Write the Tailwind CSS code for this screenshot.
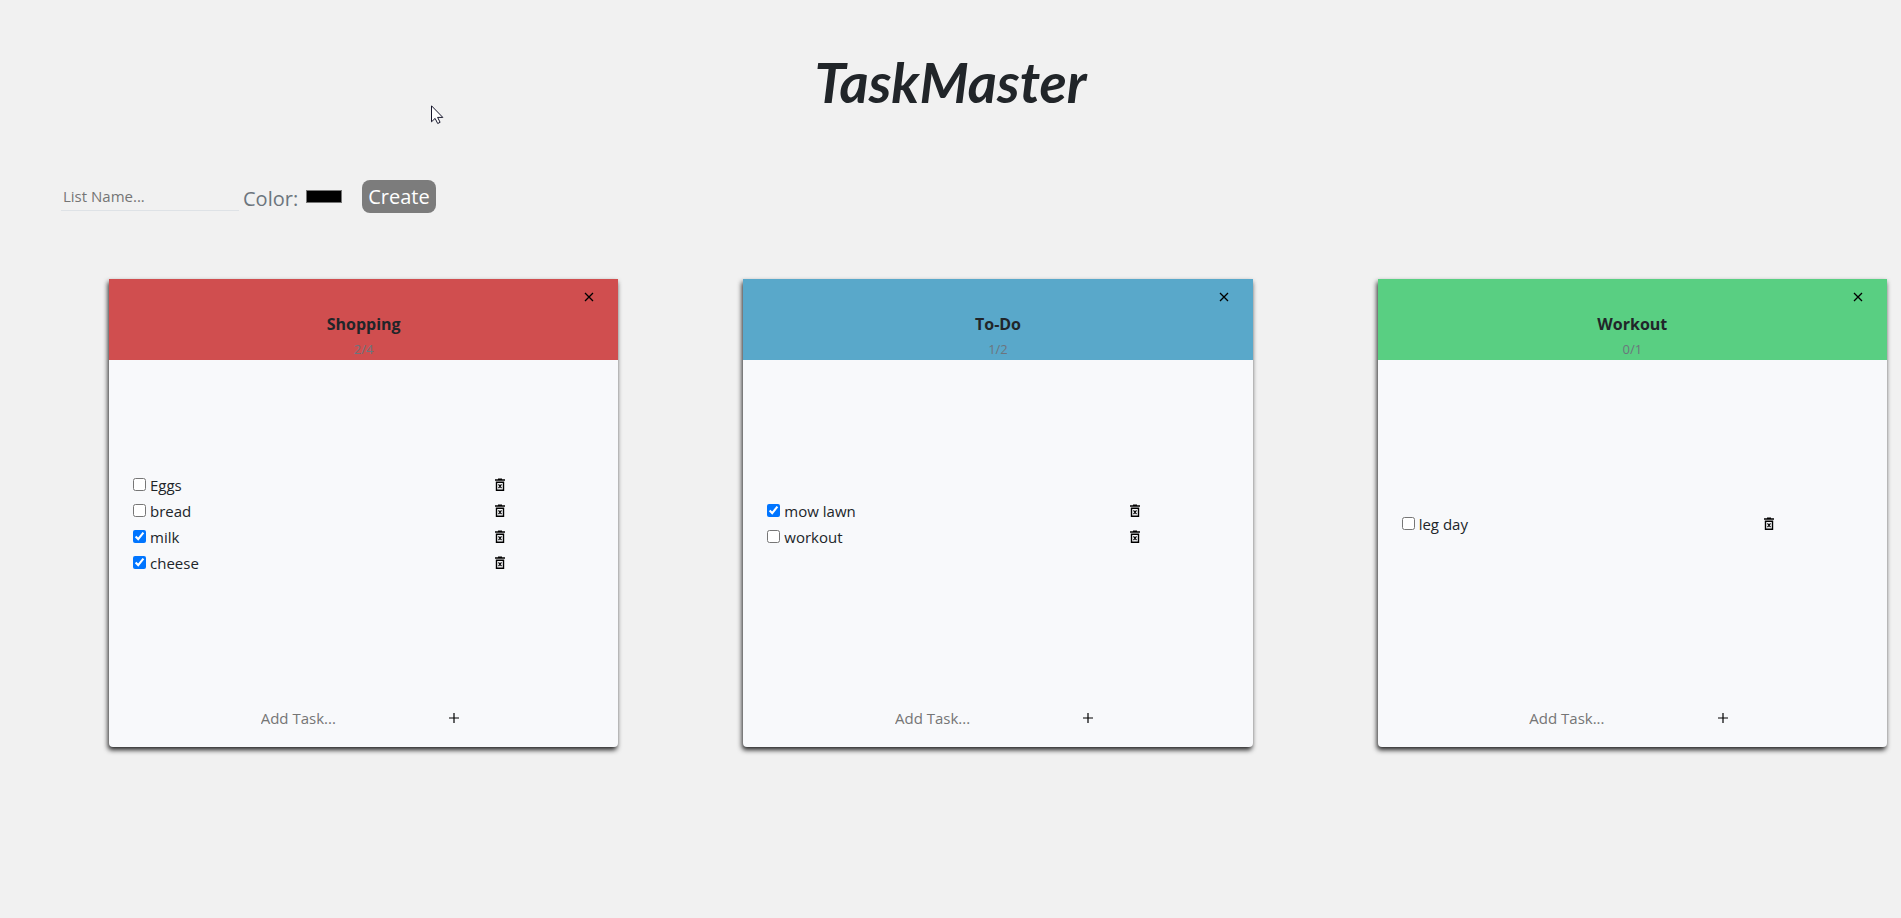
<!DOCTYPE html>
<html lang="en">
<head>
<meta charset="utf-8">
<meta name="viewport" content="width=device-width, initial-scale=1">
<title>TaskMaster</title>
<script src="https://cdn.jsdelivr.net/npm/@tailwindcss/browser@4"></script>
</head>
<body class="relative min-h-screen overflow-x-hidden bg-[#f1f1f1] font-['Open_Sans',sans-serif] text-[15px] leading-6 text-[#212529]">

<svg class="hidden" aria-hidden="true">
  <symbol id="trash" viewBox="0 0 16 16">
    <path d="M3 3h10M6 2.3h4" fill="none" stroke="currentColor" stroke-width="1.4"/>
    <path d="M4.5 5.2h7v8h-7z" fill="none" stroke="currentColor" stroke-width="1.4"/>
    <path d="M6.5 7.3l3 3.8M9.5 7.3l-3 3.8" fill="none" stroke="currentColor" stroke-width="1.2"/>
  </symbol>
  <symbol id="close" viewBox="0 0 10 10">
    <path d="M1 1l8 8M9 1l-8 8" fill="none" stroke="currentColor" stroke-width="1.3"/>
  </symbol>
  <symbol id="plus" viewBox="0 0 10 10">
    <path d="M5 0v10M0 5h10" fill="none" stroke="currentColor" stroke-width="1.2"/>
  </symbol>
</svg>

<header class="flex h-[180px] justify-center pt-8">
  <h1 class="font-['Lato','Open_Sans',sans-serif] text-[56px] leading-[100px] font-bold italic">TaskMaster</h1>
</header>

<form class="flex items-center pl-[61px]" onsubmit="return false">
  <input type="text" aria-label="List name" placeholder="List Name..." class="h-7 w-[178px] border-b border-[#dee2e6] bg-transparent px-0.5 outline-none placeholder:text-[#757575]">
  <label for="color" class="ml-1 pt-1 text-[20px] leading-7 text-[#6c757d]">Color:</label>
  <input id="color" type="color" value="#000000" class="ml-2 h-[13px] w-9 appearance-none border border-[#767676] bg-black p-0 [&::-webkit-color-swatch]:border-0 [&::-webkit-color-swatch-wrapper]:p-0">
  <button type="submit" class="ml-5 h-[33px] rounded-lg bg-[#7c7c7c] px-1.5 text-[20px] text-white">Create</button>
</form>

<main class="mt-[66px] -mr-0.5 grid grid-cols-3">
  <div class="pr-4 pl-[109px]">
    <section class="rounded-b bg-[#f8f9fb] shadow-[-1px_3px_5px_rgba(0,0,0,0.85)]">
      <header class="h-[81px] bg-[#d04e4f] text-center">
        <div class="flex justify-end pt-[13px] pr-6"><button type="button" aria-label="Delete Shopping" class="text-black"><svg class="size-2.5"><use href="#close"/></svg></button></div>
        <h2 class="mt-2.5 text-base font-bold">Shopping</h2>
        <p class="pt-px text-[13px] text-[#6c757d]">2/4</p>
      </header>
      <ul class="flex min-h-[327px] flex-col justify-center pr-1.5 pl-6">
        <li class="grid h-[26px] grid-cols-4 items-center"><label class="col-span-3 flex items-center gap-1"><input type="checkbox" class="size-[13px] accent-[#0075ff]">Eggs</label><button type="button" aria-label="Delete Eggs" class="size-4 text-black"><svg class="size-4"><use href="#trash"/></svg></button></li>
        <li class="grid h-[26px] grid-cols-4 items-center"><label class="col-span-3 flex items-center gap-1"><input type="checkbox" class="size-[13px] accent-[#0075ff]">bread</label><button type="button" aria-label="Delete bread" class="size-4 text-black"><svg class="size-4"><use href="#trash"/></svg></button></li>
        <li class="grid h-[26px] grid-cols-4 items-center"><label class="col-span-3 flex items-center gap-1"><input type="checkbox" checked class="size-[13px] accent-[#0075ff]">milk</label><button type="button" aria-label="Delete milk" class="size-4 text-black"><svg class="size-4"><use href="#trash"/></svg></button></li>
        <li class="grid h-[26px] grid-cols-4 items-center"><label class="col-span-3 flex items-center gap-1"><input type="checkbox" checked class="size-[13px] accent-[#0075ff]">cheese</label><button type="button" aria-label="Delete cheese" class="size-4 text-black"><svg class="size-4"><use href="#trash"/></svg></button></li>
      </ul>
      <form class="flex items-center justify-center pt-[19px] pb-[17px]" onsubmit="return false">
        <input type="text" aria-label="Add task to Shopping" placeholder="Add Task..." class="w-[183px] bg-transparent px-0.5 outline-none placeholder:text-[#757575]">
        <button type="submit" aria-label="Add" class="mr-0.5 flex w-[25px] justify-center text-black"><svg class="size-2.5"><use href="#plus"/></svg></button>
      </form>
    </section>
  </div>

  <div class="pr-4 pl-[109px]">
    <section class="rounded-b bg-[#f8f9fb] shadow-[-1px_3px_5px_rgba(0,0,0,0.85)]">
      <header class="h-[81px] bg-[#59a8ca] text-center">
        <div class="flex justify-end pt-[13px] pr-6"><button type="button" aria-label="Delete To-Do" class="text-black"><svg class="size-2.5"><use href="#close"/></svg></button></div>
        <h2 class="mt-2.5 text-base font-bold">To-Do</h2>
        <p class="pt-px text-[13px] text-[#6c757d]">1/2</p>
      </header>
      <ul class="flex min-h-[327px] flex-col justify-center pr-1.5 pl-6">
        <li class="grid h-[26px] grid-cols-4 items-center"><label class="col-span-3 flex items-center gap-1"><input type="checkbox" checked class="size-[13px] accent-[#0075ff]">mow lawn</label><button type="button" aria-label="Delete mow lawn" class="size-4 text-black"><svg class="size-4"><use href="#trash"/></svg></button></li>
        <li class="grid h-[26px] grid-cols-4 items-center"><label class="col-span-3 flex items-center gap-1"><input type="checkbox" class="size-[13px] accent-[#0075ff]">workout</label><button type="button" aria-label="Delete workout" class="size-4 text-black"><svg class="size-4"><use href="#trash"/></svg></button></li>
      </ul>
      <form class="flex items-center justify-center pt-[19px] pb-[17px]" onsubmit="return false">
        <input type="text" aria-label="Add task to To-Do" placeholder="Add Task..." class="w-[183px] bg-transparent px-0.5 outline-none placeholder:text-[#757575]">
        <button type="submit" aria-label="Add" class="mr-0.5 flex w-[25px] justify-center text-black"><svg class="size-2.5"><use href="#plus"/></svg></button>
      </form>
    </section>
  </div>

  <div class="pr-4 pl-[109px]">
    <section class="rounded-b bg-[#f8f9fb] shadow-[-1px_3px_5px_rgba(0,0,0,0.85)]">
      <header class="h-[81px] bg-[#59cf82] text-center">
        <div class="flex justify-end pt-[13px] pr-6"><button type="button" aria-label="Delete Workout" class="text-black"><svg class="size-2.5"><use href="#close"/></svg></button></div>
        <h2 class="mt-2.5 text-base font-bold">Workout</h2>
        <p class="pt-px text-[13px] text-[#6c757d]">0/1</p>
      </header>
      <ul class="flex min-h-[327px] flex-col justify-center pr-1.5 pl-6">
        <li class="grid h-[26px] grid-cols-4 items-center"><label class="col-span-3 flex items-center gap-1"><input type="checkbox" class="size-[13px] accent-[#0075ff]">leg day</label><button type="button" aria-label="Delete leg day" class="size-4 text-black"><svg class="size-4"><use href="#trash"/></svg></button></li>
      </ul>
      <form class="flex items-center justify-center pt-[19px] pb-[17px]" onsubmit="return false">
        <input type="text" aria-label="Add task to Workout" placeholder="Add Task..." class="w-[183px] bg-transparent px-0.5 outline-none placeholder:text-[#757575]">
        <button type="submit" aria-label="Add" class="mr-0.5 flex w-[25px] justify-center text-black"><svg class="size-2.5"><use href="#plus"/></svg></button>
      </form>
    </section>
  </div>
</main>

<!-- Mouse pointer -->
<svg class="pointer-events-none absolute top-[105px] left-[431px] h-5 w-[13px]" viewBox="0 0 13 20" aria-hidden="true">
  <path d="M.5 .8v16l3.6-3.4 2.6 5.1 2.4-1.2-2.5-4.9h5.2z" fill="#fff" stroke="#15152a" stroke-width="1"/>
</svg>
</body>
</html>
